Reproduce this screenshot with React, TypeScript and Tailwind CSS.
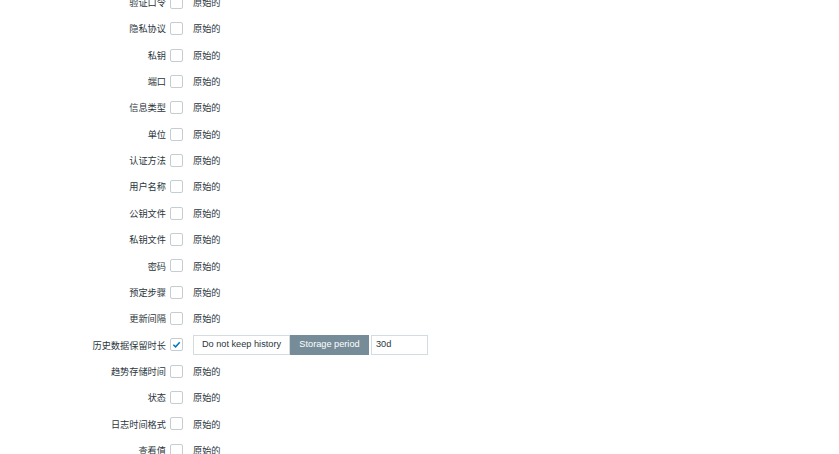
const rows: { label: string; history?: boolean }[] = [
  { label: '验证口令' },
  { label: '隐私协议' },
  { label: '私钥' },
  { label: '端口' },
  { label: '信息类型' },
  { label: '单位' },
  { label: '认证方法' },
  { label: '用户名称' },
  { label: '公钥文件' },
  { label: '私钥文件' },
  { label: '密码' },
  { label: '预定步骤' },
  { label: '更新间隔' },
  { label: '历史数据保留时长', history: true },
  { label: '趋势存储时间' },
  { label: '状态' },
  { label: '日志时间格式' },
  { label: '查看值' },
];

function Check({ checked }: { checked?: boolean }) {
  return (
    <span className="flex h-[13px] w-[13px] shrink-0 items-center justify-center rounded-[2px] border border-[#c3cdd2] bg-white">
      {checked && (
        <svg width="9" height="9" viewBox="0 0 10 10">
          <path d="M1.5 5.2 L4 7.6 L8.6 2.4" fill="none" stroke="#0275b8" strokeWidth="1.6" />
        </svg>
      )}
    </span>
  );
}

export default function App() {
  return (
    <div
      className="h-[454px] w-[839px] overflow-hidden bg-white text-[9.2px] text-[#2b363c]"
      style={{ fontFamily: '"Liberation Sans", Arial, "Noto Sans CJK SC", sans-serif' }}
    >
      <div className="mt-[-10.7px] flex flex-col">
        {rows.map((r) => (
          <div key={r.label} className="flex h-[26.35px] items-center">
            <div className="w-[166px] shrink-0 pt-[3px] text-right">{r.label}</div>
            <div className="ml-[4px]">
              <Check checked={r.history} />
            </div>
            <div className="ml-[10px] flex items-center">
              {r.history ? (
                <div className="flex h-[20px] items-stretch">
                  <div className="flex w-[97px] items-center justify-center border border-[#d5dce0] bg-white">
                    Do not keep history
                  </div>
                  <div className="flex w-[79px] items-center justify-center bg-[#768d99] text-white">
                    Storage period
                  </div>
                  <div className="ml-[2px] flex w-[57px] items-center border border-[#d5dce0] bg-white pl-[4px]">
                    30d
                  </div>
                </div>
              ) : (
                <span className="pt-[3px]">原始的</span>
              )}
            </div>
          </div>
        ))}
      </div>
    </div>
  );
}
